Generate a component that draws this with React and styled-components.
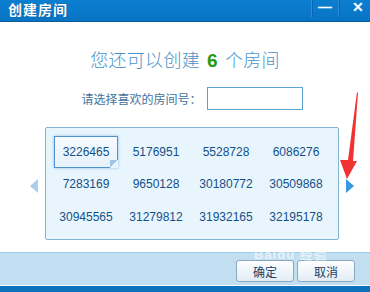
import React, { useState } from "react";
import styled, { createGlobalStyle } from "styled-components";

const GlobalStyle = createGlobalStyle`
  html, body { margin: 0; padding: 0; background: #ffffff; }
  body { font-family: "Liberation Sans", "Noto Sans CJK SC", sans-serif; }
`;

const Dialog = styled.div`
  position: relative;
  width: 370px;
  height: 292px;
  display: flex;
  flex-direction: column;
  overflow: hidden;
  background: #ffffff;
`;

const TitleBar = styled.div`
  height: 21px;
  display: flex;
  align-items: center;
  justify-content: space-between;
  background: linear-gradient(#0c7fd0, #0873c3);
  border-bottom: 1px solid #0a5a98;
`;

const Title = styled.div`
  padding-left: 8px;
  color: #ffffff;
  font-size: 14px;
  font-weight: bold;
  letter-spacing: 1px;
  text-shadow: 0 0 1px #0a4a80;
  margin-top: -3px;
`;

const WinButtons = styled.div`
  display: flex;
  height: 100%;
  margin-right: -6px;
`;

const WinButton = styled.div`
  width: 26px;
  height: 100%;
  display: flex;
  align-items: center;
  justify-content: center;
  border-left: 1px solid #2a8fd8;
  box-shadow: inset 1px 0 0 #0866ae;
  color: #ffffff;
  font-weight: bold;
  font-size: 14px;
  margin-top: -4px;
  &:first-child { width: 26px; }
  &:last-child { width: 37px; }
`;

const Body = styled.div`
  flex: 1;
  display: flex;
  flex-direction: column;
  align-items: center;
  padding-top: 25px;
`;

const Heading = styled.div`
  font-size: 18px;
  color: #4a93c9;
  letter-spacing: 0.3px;
  line-height: 24px;
  font-family: "Noto Sans CJK SC", sans-serif;
  font-weight: 300;
`;

const Count = styled.span`
  color: #2a9a10;
  font-weight: bold;
  font-family: "Liberation Sans", sans-serif;
  font-size: 19px;
  margin: 0 7px;
`;

const PickRow = styled.div`
  margin-top: 14px;
  display: flex;
  align-items: center;
  gap: 5px;
  margin-left: 14px;
`;

const Label = styled.span`
  font-size: 12px;
  color: #45739c;
`;

const Input = styled.input`
  width: 96px;
  height: 23px;
  box-sizing: border-box;
  border: 1px solid #5aa2d2;
  outline: none;
  padding: 0 4px;
`;

const Carousel = styled.div`
  margin-top: 17px;
  display: flex;
  align-items: center;
  gap: 7px;
  margin-left: 14px;
`;

const Arrow = styled.div`
  width: 0;
  height: 0;
  border-top: 7px solid transparent;
  border-bottom: 7px solid transparent;
  ${(p) =>
    p.$dir === "left"
      ? `border-right: 8px solid #a8d0ee;`
      : `border-left: 8px solid #3a98de;`}
  margin-top: 4px;
`;

const Panel = styled.div`
  width: 294px;
  height: 113px;
  box-sizing: border-box;
  background: #e9f5fd;
  border: 1px solid #82b4d3;
  border-radius: 2px;
  display: grid;
  grid-template-columns: repeat(4, 70px);
  grid-template-rows: repeat(3, 32.5px);
  padding: 8px 0 0 5px;
  align-content: start;
`;

const Cell = styled.div`
  position: relative;
  display: flex;
  align-items: center;
  justify-content: center;
  font-size: 12px;
  color: #12508a;
  margin: 1px 3px 2px;
  box-sizing: border-box;
  ${(p) =>
    p.$active &&
    `
    background: linear-gradient(#f6fbff, #e6f1fb);
    border: 1px solid #4e93cc;
    box-shadow: 0 0 3px #8cc0e8;
    margin: 0 3px 1px 3px;
  `}
`;

const Fold = styled.span`
  position: absolute;
  right: -1px;
  bottom: -1px;
  width: 8px;
  height: 8px;
  background: linear-gradient(135deg, #9ec6e8 50%, #e9f5fd 50%);
`;

const Footer = styled.div`
  height: 32px;
  background: #c2def1;
  border-top: 1px solid #9ccbe8;
  display: flex;
  justify-content: flex-end;
  align-items: center;
  gap: 3px;
  padding-right: 15px;
  position: relative;
`;

const Button = styled.button`
  width: 58px;
  height: 22px;
  border: 1px solid #8aa8c0;
  border-radius: 3px;
  background: linear-gradient(#fdfeff, #e2ecf5);
  font-size: 12px;
  color: #1a3f66;
  font-family: "Noto Sans CJK SC", sans-serif;
  padding: 0;
  margin-top: 4px;
`;

const BottomStrip = styled.div`
  height: 6px;
  background: #0e72bd;
  border-top: 1px solid #ffffff;
`;

const Watermark = styled.div`
  position: absolute;
  left: 254px;
  top: -5px;
  font-size: 13px;
  line-height: 14px;
  font-weight: bold;
  color: rgba(255, 255, 255, 0.6);
  letter-spacing: 1px;
  pointer-events: none;
`;

const RedArrow = styled.svg`
  position: absolute;
  left: 336px;
  top: 90px;
`;

const rooms = [
  "3226465", "5176951", "5528728", "6086276",
  "7283169", "9650128", "30180772", "30509868",
  "30945565", "31279812", "31932165", "32195178",
];

const App = () => {
  const [selected, setSelected] = useState(0);
  const [num, setNum] = useState("");

  return (
    <>
      <GlobalStyle />
      <Dialog>
        <TitleBar>
          <Title>创建房间</Title>
          <WinButtons>
            <WinButton>—</WinButton>
            <WinButton>✕</WinButton>
          </WinButtons>
        </TitleBar>
        <Body>
          <Heading>
            您还可以创建<Count>6</Count>个房间
          </Heading>
          <PickRow>
            <Label>请选择喜欢的房间号：</Label>
            <Input value={num} onChange={(e) => setNum(e.target.value)} />
          </PickRow>
          <Carousel>
            <Arrow $dir="left" />
            <Panel>
              {rooms.map((r, idx) => (
                <Cell key={r} $active={idx === selected} onClick={() => setSelected(idx)}>
                  {r}
                  {idx === selected && <Fold />}
                </Cell>
              ))}
            </Panel>
            <Arrow $dir="right" />
          </Carousel>
        </Body>
        <Footer>
          <Watermark>Baidu 经验</Watermark>
          <Button>确定</Button>
          <Button>取消</Button>
        </Footer>
        <BottomStrip />
        <RedArrow width="26" height="92" viewBox="0 0 26 92">
          <polygon points="21,2 22,3 17,71 21,71 11,89 4,70 12,70" fill="#f23232" />
        </RedArrow>
      </Dialog>
    </>
  );
};

export default App;
